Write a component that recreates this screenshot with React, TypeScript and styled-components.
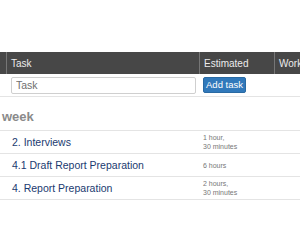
import React from "react";
import styled, { createGlobalStyle } from "styled-components";

const GlobalStyle = createGlobalStyle`
  html, body {
    margin: 0;
    padding: 0;
    background: #ffffff;
    font-family: "Liberation Sans", Arial, sans-serif;
  }
`;

const columns = "7px 193px 75px 1fr";

const tasks = [
  { name: "2. Interviews", estimate: ["1 hour,", "30 minutes"] },
  { name: "4.1 Draft Report Preparation", estimate: ["6 hours"] },
  { name: "4. Report Preparation", estimate: ["2 hours,", "30 minutes"] },
];

export default function App() {
  return (
    <>
      <GlobalStyle />
      <Page>
        <HeaderRow>
          <HeadCell />
          <HeadCell>Task</HeadCell>
          <HeadCell>Estimated</HeadCell>
          <HeadCell>Work</HeadCell>
        </HeaderRow>
        <InputRow>
          <span />
          <TaskInput placeholder="Task" />
          <AddButton>Add task</AddButton>
          <span />
        </InputRow>
        <SectionTitle>week</SectionTitle>
        <TaskList>
          {tasks.map((t) => (
            <TaskRow key={t.name}>
              <span />
              <TaskName>{t.name}</TaskName>
              <Estimate>
                {t.estimate.map((line) => (
                  <div key={line}>{line}</div>
                ))}
              </Estimate>
              <span />
            </TaskRow>
          ))}
        </TaskList>
      </Page>
    </>
  );
}

const Page = styled.div`
  width: 300px;
  height: 250px;
  overflow: hidden;
  padding-top: 52px;
  box-sizing: border-box;
`;

const HeaderRow = styled.div`
  display: grid;
  grid-template-columns: ${columns};
  height: 22px;
  background-color: #4b4b4b;
  background-image: radial-gradient(rgba(0, 0, 0, 0.12) 0.6px, transparent 0.8px);
  background-size: 2px 2px;
`;

const HeadCell = styled.div`
  display: flex;
  align-items: center;
  padding-left: 4px;
  border-right: 1px solid #767676;
  color: #ececec;
  font-size: 10px;
  white-space: nowrap;
  overflow: hidden;

  &:last-child {
    border-right: none;
  }
`;

const InputRow = styled.div`
  display: grid;
  grid-template-columns: ${columns};
  align-items: center;
  height: 22px;
  border-bottom: 1px solid #e4e4e4;
`;

const TaskInput = styled.input`
  box-sizing: border-box;
  margin-left: 4px;
  width: 185px;
  height: 17px;
  padding: 0 4px;
  border: 1px solid #cfcfcf;
  border-radius: 2px;
  font-family: "Liberation Sans", Arial, sans-serif;
  font-size: 10.5px;
  color: #333;
  outline: none;

  &::placeholder {
    color: #6f6f6f;
  }
`;

const AddButton = styled.button`
  justify-self: start;
  margin-left: 3px;
  width: 43px;
  height: 16px;
  padding: 0;
  border: 1px solid #2a6aa3;
  border-radius: 2px;
  background: #3179bb;
  color: #ffffff;
  font-family: "Liberation Sans", Arial, sans-serif;
  font-size: 9.5px;
  line-height: 14px;
  text-align: center;
`;

const SectionTitle = styled.div`
  height: 33px;
  box-sizing: border-box;
  padding: 13px 0 0 2px;
  color: #8a8a8a;
  font-size: 13px;
  font-weight: bold;
  line-height: 14px;
`;

const TaskList = styled.div`
  border-top: 1px solid #e4e4e4;
`;

const TaskRow = styled.div`
  display: grid;
  grid-template-columns: ${columns};
  align-items: center;
  height: 22px;
  border-bottom: 1px solid #e4e4e4;
`;

const TaskName = styled.div`
  padding-left: 5px;
  color: #1a3a70;
  font-size: 10.5px;
  white-space: nowrap;
`;

const Estimate = styled.div`
  padding-left: 3px;
  color: #777;
  font-size: 7px;
  line-height: 9px;
`;
